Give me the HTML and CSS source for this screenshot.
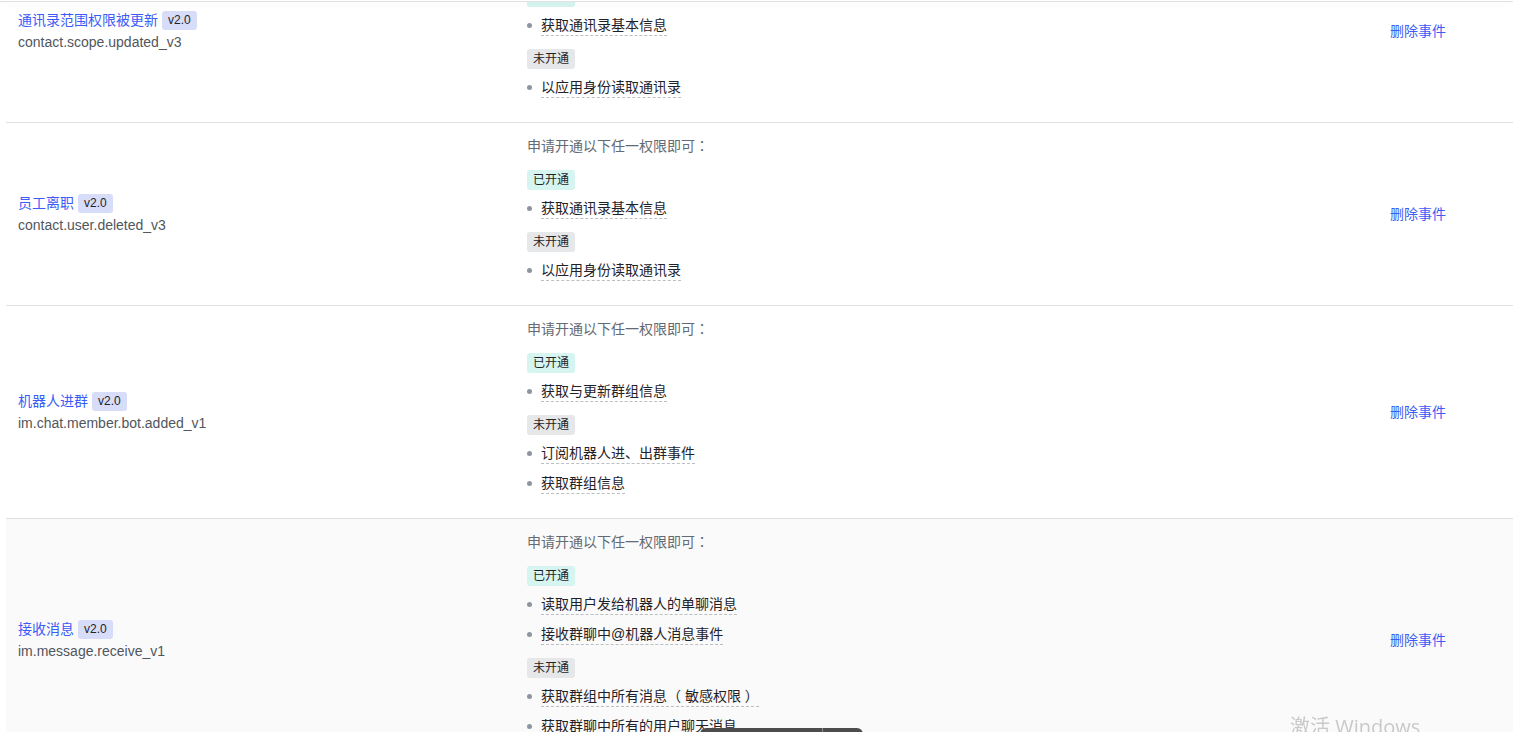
FILE: index.html
```html
<!DOCTYPE html>
<html lang="zh-CN">
<head>
    <meta charset="UTF-8">
    <meta name="viewport" content="width=device-width, initial-scale=1.0">
    <title>事件订阅</title>
    <link rel="stylesheet" href="styles.css">
</head>
<body>
    <div class="head-edge"></div>
    <div class="event-table">
        <div class="row">
            <div class="cell name">
                <div class="title"><a href="#">通讯录范围权限被更新</a><span class="ver">v2.0</span></div>
                <div class="code">contact.scope.updated_v3</div>
            </div>
            <div class="cell perms">
                <p class="hint">申请开通以下任一权限即可<span class="colon" lang="zh-TW">：</span></p>
                <span class="tag on">已开通</span>
                <ul>
                    <li><span>获取通讯录基本信息</span></li>
                </ul>
                <span class="tag off">未开通</span>
                <ul>
                    <li><span>以应用身份读取通讯录</span></li>
                </ul>
            </div>
            <div class="cell ops"><a href="#">删除事件</a></div>
        </div>

        <div class="row">
            <div class="cell name">
                <div class="title"><a href="#">员工离职</a><span class="ver">v2.0</span></div>
                <div class="code">contact.user.deleted_v3</div>
            </div>
            <div class="cell perms">
                <p class="hint">申请开通以下任一权限即可<span class="colon" lang="zh-TW">：</span></p>
                <span class="tag on">已开通</span>
                <ul>
                    <li><span>获取通讯录基本信息</span></li>
                </ul>
                <span class="tag off">未开通</span>
                <ul>
                    <li><span>以应用身份读取通讯录</span></li>
                </ul>
            </div>
            <div class="cell ops"><a href="#">删除事件</a></div>
        </div>

        <div class="row">
            <div class="cell name">
                <div class="title"><a href="#">机器人进群</a><span class="ver">v2.0</span></div>
                <div class="code">im.chat.member.bot.added_v1</div>
            </div>
            <div class="cell perms">
                <p class="hint">申请开通以下任一权限即可<span class="colon" lang="zh-TW">：</span></p>
                <span class="tag on">已开通</span>
                <ul>
                    <li><span>获取与更新群组信息</span></li>
                </ul>
                <span class="tag off">未开通</span>
                <ul>
                    <li><span>订阅机器人进、出群事件</span></li>
                    <li><span>获取群组信息</span></li>
                </ul>
            </div>
            <div class="cell ops"><a href="#">删除事件</a></div>
        </div>

        <div class="row hover">
            <div class="cell name">
                <div class="title"><a href="#">接收消息</a><span class="ver">v2.0</span></div>
                <div class="code">im.message.receive_v1</div>
            </div>
            <div class="cell perms">
                <p class="hint">申请开通以下任一权限即可<span class="colon" lang="zh-TW">：</span></p>
                <span class="tag on">已开通</span>
                <ul>
                    <li><span>读取用户发给机器人的单聊消息</span></li>
                    <li><span>接收群聊中@机器人消息事件</span></li>
                </ul>
                <span class="tag off">未开通</span>
                <ul>
                    <li><span>获取群组中所有消息（ 敏感权限 ）</span></li>
                    <li><span>获取群聊中所有的用户聊天消息</span></li>
                </ul>
            </div>
            <div class="cell ops"><a href="#">删除事件</a></div>
        </div>
    </div>

    <div class="float-bar"><span class="part"></span><span class="part last"></span></div>
    <div class="watermark">激活 Windows</div>
</body>
</html>
```

FILE: styles.css
```css
* {
    margin: 0;
    padding: 0;
    box-sizing: border-box;
}
body {
    font-family: "Liberation Sans", "Noto Sans CJK SC", sans-serif;
    font-size: 14px;
    color: #1f2329;
    background: #fff;
    overflow: hidden;
    height: 732px;
}
a {
    color: #3b5cf6;
    text-decoration: none;
}
.head-edge {
    position: relative;
    z-index: 2;
    height: 2px;
    border-bottom: 1px solid #e1e1e1;
    background: #fff;
    box-shadow: 0 2px 8px rgba(0, 0, 0, 0.06);
}
.event-table {
    margin: -62px 0 0 6px;
}
.row {
    display: grid;
    grid-template-columns: 509px 863px 1fr;
    align-items: center;
    border-bottom: 1px solid #dee0e3;
}
.row.hover {
    background: #fafafa;
}
.cell {
    padding: 0 12px;
}
.title {
    display: flex;
    align-items: center;
    line-height: 22px;
}
.ver {
    margin-left: 4px;
    padding: 0 6px;
    font-size: 12px;
    line-height: 19px;
    border-radius: 3px;
    background: #d7ddf9;
    color: #1f2329;
}
.code {
    line-height: 22px;
    color: #51565d;
}
.perms {
    padding: 12px 12px 24px;
}
.hint {
    height: 22px;
    line-height: 22px;
    color: #646a73;
}
.colon {
    font-family: "Noto Sans CJK TC", sans-serif;
    line-height: 14px;
}
.tag {
    display: inline-block;
    margin-top: 13px;
    padding: 0 6px;
    font-size: 12px;
    line-height: 20px;
    border-radius: 3px;
}
.tag.on {
    background: #d6f5f0;
}
.tag.off {
    background: #e6e7e8;
}
ul {
    list-style: none;
}
li {
    display: flex;
    align-items: center;
    margin-top: 8px;
    line-height: 20px;
}
li + li {
    margin-top: 9px;
}
li::before {
    content: "";
    width: 5px;
    height: 5px;
    margin: 0 9px 0 0;
    border-radius: 50%;
    background: #8f959e;
}
li span {
    border-bottom: 1px dashed #bbbfc4;
}
.ops a {
    display: inline-block;
    line-height: 22px;
}
.float-bar {
    position: fixed;
    left: 700px;
    top: 728px;
    width: 163px;
    height: 24px;
    display: flex;
    background: #4d4d4d;
    border-radius: 6px 6px 0 0;
}
.float-bar .part {
    width: 123px;
    border-right: 1px solid #8a8a8a;
}
.float-bar .part.last {
    flex: 1;
    border: none;
}
.watermark {
    position: fixed;
    left: 1290px;
    top: 714px;
    font-family: "Open Sans", "Noto Sans CJK SC", sans-serif;
    font-size: 20px;
    line-height: 26px;
    color: #c9c9c9;
    white-space: nowrap;
}
```
